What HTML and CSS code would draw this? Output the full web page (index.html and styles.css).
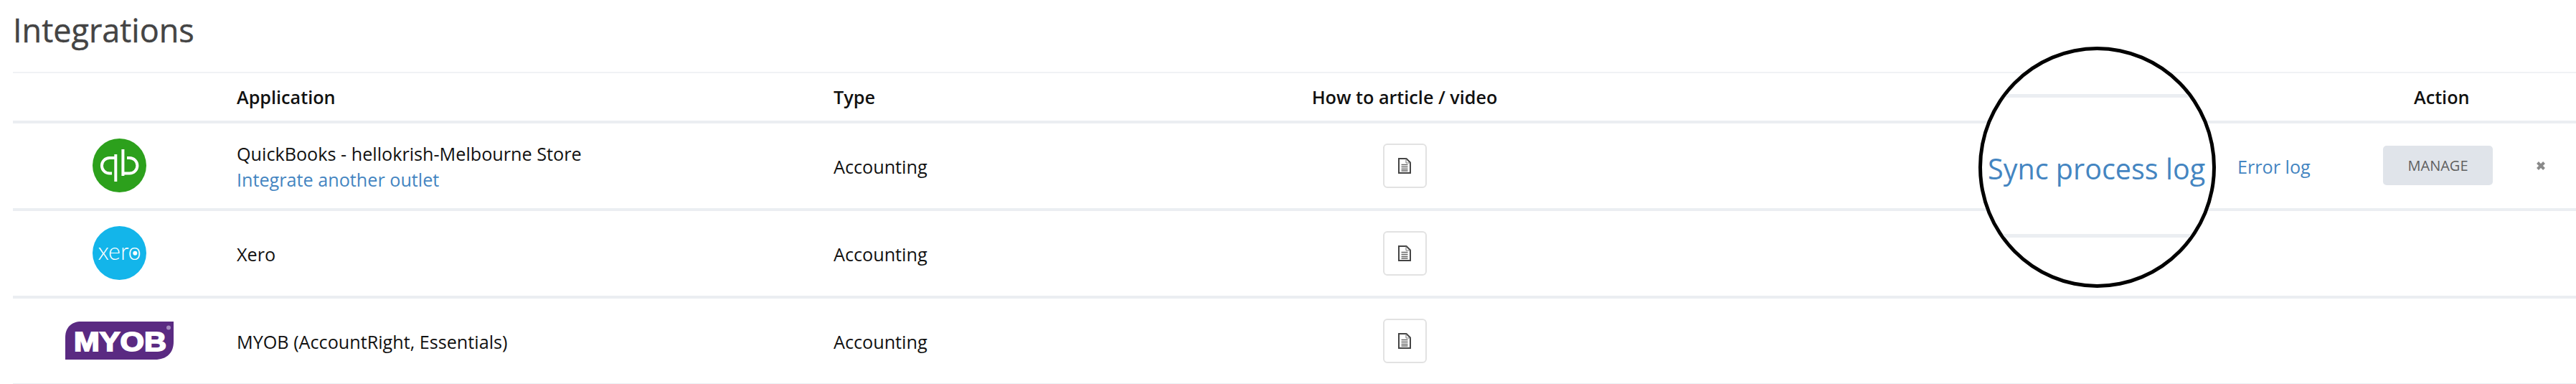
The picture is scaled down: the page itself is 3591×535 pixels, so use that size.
FILE: index.html
```html
<!DOCTYPE html>
<html lang="en">
<head>
<meta charset="utf-8">
<title>Integrations</title>
<link rel="stylesheet" href="styles.css">
</head>
<body>
<main class="page">
  <h1 class="title">Integrations</h1>
  <div class="table">
    <div class="row head">
      <div></div>
      <div>Application</div>
      <div>Type</div>
      <div class="center">How to article / video</div>
      <div></div>
      <div></div>
      <div class="action-head">Action</div>
    </div>
    <div class="row">
      <div class="logo">
        <svg class="logo-round" viewBox="0 0 75 75">
          <circle cx="37.500" cy="37.500" r="37.500" fill="#2ca01c"/>
          <g fill="none" stroke="#fff" stroke-width="4">
            <path d="M32.300 60V22M42.400 15V52"/>
            <path d="M32 27H23.700a10.800 10.800 0 0 0 0 21.600H27"/>
            <path d="M42.700 48.600H51.600a10.800 10.800 0 0 0 0-21.600H48"/>
          </g>
        </svg>
      </div>
      <div class="app">
        <span>QuickBooks - hellokrish-Melbourne Store</span>
        <a class="link" href="#">Integrate another outlet</a>
      </div>
      <div>Accounting</div>
      <div class="center raised"><button class="doc"><svg class="doc-icon" viewBox="0 0 18 22"><path d="M1 1H11.500L17 6.500V21H1Z" fill="#fff" stroke="#444" stroke-width="2"/><path d="M11 1V7H17" fill="none" stroke="#777" stroke-width="1"/><path d="M4.500 9.500H13.500M4.500 12.500H13.500M4.500 15.500H13.500M4.500 18H13.500" stroke="#666" stroke-width="1.700"/></svg></button></div>
      <div></div>
      <div><a class="link" href="#">Error log</a></div>
      <div class="actions raised">
        <button class="manage">MANAGE</button>
        <svg class="close" viewBox="0 0 14 14"><path d="M2.500 2.500L11.500 11.500M11.500 2.500L2.500 11.500" stroke="#8a8a8a" stroke-width="4"/></svg>
      </div>
    </div>
    <div class="row">
      <div class="logo raised">
        <svg class="logo-round" viewBox="0 0 75 75">
          <circle cx="37.500" cy="37.500" r="37.500" fill="#13b5ea"/>
          <text class="xero-word" x="7.500" y="46.500" textLength="60" lengthAdjust="spacingAndGlyphs">xero</text>
          <circle cx="59.300" cy="37.800" r="3" fill="#fff"/>
        </svg>
      </div>
      <div class="app"><span>Xero</span></div>
      <div>Accounting</div>
      <div class="center raised"><button class="doc"><svg class="doc-icon" viewBox="0 0 18 22"><path d="M1 1H11.500L17 6.500V21H1Z" fill="#fff" stroke="#444" stroke-width="2"/><path d="M11 1V7H17" fill="none" stroke="#777" stroke-width="1"/><path d="M4.500 9.500H13.500M4.500 12.500H13.500M4.500 15.500H13.500M4.500 18H13.500" stroke="#666" stroke-width="1.700"/></svg></button></div>
      <div></div><div></div><div></div>
    </div>
    <div class="row">
      <div class="logo raised">
        <svg class="logo-myob" viewBox="0 0 151 53">
          <path d="M22 0H151V28C151 44 141 53 125 53H0V22C0 8 9 0 22 0Z" fill="#5a2a82"/>
          <text class="myob-word" x="12" y="40.500" textLength="129" lengthAdjust="spacingAndGlyphs">MYOB</text>
          <circle cx="144" cy="8.500" r="3" fill="#a58abf"/>
        </svg>
      </div>
      <div class="app"><span>MYOB (AccountRight, Essentials)</span></div>
      <div>Accounting</div>
      <div class="center raised"><button class="doc"><svg class="doc-icon" viewBox="0 0 18 22"><path d="M1 1H11.500L17 6.500V21H1Z" fill="#fff" stroke="#444" stroke-width="2"/><path d="M11 1V7H17" fill="none" stroke="#777" stroke-width="1"/><path d="M4.500 9.500H13.500M4.500 12.500H13.500M4.500 15.500H13.500M4.500 18H13.500" stroke="#666" stroke-width="1.700"/></svg></button></div>
      <div></div><div></div><div></div>
    </div>
  </div>
  <div class="magnifier">
    <span class="mag-line mag-top"></span>
    <a class="mag-link" href="#">Sync process log</a>
    <span class="mag-line mag-bottom"></span>
  </div>
</main>
</body>
</html>
```
FILE: styles.css
```css
* { box-sizing: border-box; }
html, body { margin: 0; padding: 0; background: #fff; }
body { font-family: "Open Sans", sans-serif; color: #111; overflow: hidden; }
.page { position: relative; width: 3591px; height: 535px; padding-left: 18px; overflow: hidden; }
.title { margin: 0; height: 100px; padding-top: 12px; font-size: 45px; line-height: 60px; font-weight: 400; color: #444; -webkit-text-stroke: 0.4px #444; }
.table { border-top: 2px solid #f0f2f5; }
.row {
  display: grid;
  grid-template-columns: 312px 832px 520px 552px 885px 203px 269px;
  align-items: center;
  height: 122px;
  padding-top: 2px;
  border-bottom: 4px solid #ebeef2;
  font-size: 25.200px;
}
.head { height: 70px; padding-top: 0; font-weight: 600; }
.center { text-align: center; }
.raised { margin-bottom: 3px; }
.action-head { padding-left: 43px; }
.logo { display: flex; justify-content: center; padding-right: 15px; margin-bottom: 3px; }
.logo-round { width: 75px; height: 75px; display: block; }
.logo-myob { width: 151px; height: 53px; display: block; }
.xero-word { font-family: "Lato", sans-serif; font-weight: 300; font-size: 34px; fill: #fff; }
.myob-word { font-family: "Liberation Sans", sans-serif; font-weight: 700; font-size: 37px; fill: #fff; stroke: #fff; stroke-width: 1.800px; }
.app { display: flex; flex-direction: column; gap: 2px; }
.link { color: #4485c1; text-decoration: none; }
.doc { width: 61px; height: 62px; padding: 0; display: inline-flex; align-items: center; justify-content: center; vertical-align: top; background: #fff; border: 2px solid #e2e2e2; border-radius: 6px; }
.doc-icon { width: 18px; height: 22px; display: block; }
.actions { display: flex; align-items: center; gap: 60px; }
.manage { width: 153px; height: 55px; padding: 0; font-family: inherit; font-size: 20px; font-weight: 500; color: #5f5f5f; background: #e0e4ea; border: 0; border-radius: 5px; }
.close { width: 14px; height: 14px; display: block; }
.magnifier { position: absolute; left: 2758px; top: 65px; width: 331px; height: 336px; border: 5px solid #000; border-radius: 50%; background: #fff; overflow: hidden; }
.mag-line { position: absolute; left: 0; right: 0; height: 5px; background: #ebeef2; }
.mag-top { top: 61px; }
.mag-bottom { top: 256px; }
.mag-link { position: absolute; left: 8px; top: 135px; font-size: 39.500px; line-height: 60px; white-space: nowrap; color: #4485c1; text-decoration: none; }
```
